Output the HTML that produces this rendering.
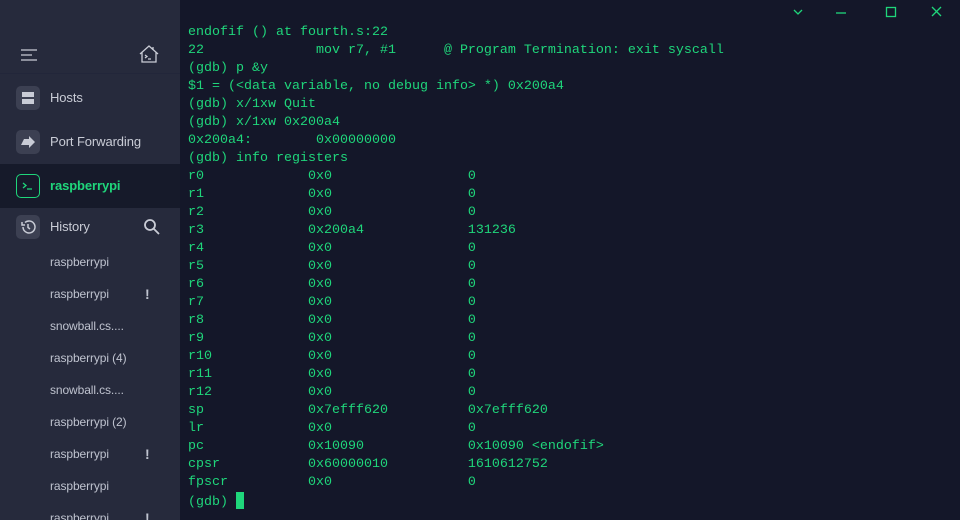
<!DOCTYPE html>
<html><head><style>
*{margin:0;padding:0;box-sizing:border-box}
html,body{width:960px;height:520px;overflow:hidden}
body{background:#141729;position:relative;font-family:"Liberation Sans",sans-serif}
#side{position:absolute;left:0;top:0;width:180px;height:520px;background:#262a3c}
.hdr{position:absolute;left:0;top:0;width:180px;height:74px;border-bottom:1px solid #22263a}
.row{position:absolute;left:0;width:180px;height:44px}
.ic{position:absolute;left:16px;top:10px;width:24px;height:24px;border-radius:5px;background:#3c4052}
.lbl{position:absolute;left:50px;top:14px;font-size:13px;color:#c9ccd6;letter-spacing:-0.1px}
.act{background:#161a2a;top:164px}
.hi{position:absolute;left:50px;font-size:12px;color:#bfc3cf;letter-spacing:-0.1px}
.ex{position:absolute;left:145px;font-size:14px;color:#bfc3cf;font-weight:bold}
#term{position:absolute;left:188px;top:24px;font-family:"Liberation Mono",monospace;font-size:13.33px;line-height:18px;color:#1fd67b;white-space:pre}
.cur{display:inline-block;width:8px;height:17px;background:#1fd67b;vertical-align:-4px}
</style></head><body>
<div id="side">
<div class="hdr">
<svg style="position:absolute;left:20px;top:48px" width="18" height="14"><path d="M1 2H17M1 7H12M1 12H17" stroke="#c9ccd6" stroke-width="1.3"/></svg>
<svg style="position:absolute;left:139px;top:45px" width="20" height="18" fill="none" stroke="#c9ccd6" stroke-width="1.3"><path d="M1 9L10 1L19 9M3 7V17H17V7M6 10L8 11.5L6 13M9 14H12"/><path d="M14 2V5"/></svg>
</div>
<div class="row" style="top:76px"><div class="ic"><svg width="24" height="24"><rect x="6" y="6" width="12" height="5" fill="#c9ccd6"/><rect x="6" y="13" width="12" height="5" fill="#c9ccd6"/></svg></div><div class="lbl">Hosts</div></div>
<div class="row" style="top:120px"><div class="ic"><svg width="24" height="24"><path d="M5 15L8 9H13V6L19 12L13 18V15Z" fill="#c9ccd6"/></svg></div><div class="lbl">Port Forwarding</div></div>
<div class="row act"><div class="ic" style="background:none;border:1px solid #1fd67b;top:10px"><svg width="22" height="22" fill="none" stroke="#1fd67b" stroke-width="1.3"><path d="M6 8L9 10.5L6 13M10 14H15"/></svg></div><div class="lbl" style="color:#1fd67b;font-weight:bold">raspberrypi</div></div>
<div class="row" style="top:205px"><div class="ic"><svg width="24" height="24" fill="none" stroke="#c9ccd6" stroke-width="1.5"><path d="M7 12A6 6 0 1 0 9 7.5M6 7V10H9M12 9V12.5L14 14"/></svg></div><div class="lbl">History</div>
<svg style="position:absolute;left:143px;top:13px" width="18" height="18" fill="none" stroke="#c9ccd6" stroke-width="1.8"><circle cx="7" cy="7" r="5"/><path d="M11 11L16 16"/></svg></div>
<div class="hi" style="top:255px">raspberrypi</div>
<div class="hi" style="top:287px">raspberrypi</div><div class="ex" style="top:286px">!</div>
<div class="hi" style="top:319px">snowball.cs....</div>
<div class="hi" style="top:351px">raspberrypi (4)</div>
<div class="hi" style="top:383px">snowball.cs....</div>
<div class="hi" style="top:415px">raspberrypi (2)</div>
<div class="hi" style="top:447px">raspberrypi</div><div class="ex" style="top:446px">!</div>
<div class="hi" style="top:479px">raspberrypi</div>
<div class="hi" style="top:511px">raspberrypi</div><div class="ex" style="top:510px">!</div>
</div>
<svg style="position:absolute;left:792px;top:6px" width="150" height="14" fill="none" stroke="#1fd67b" stroke-width="1.3"><path d="M2 4L6 8L10 4"/><path d="M44 7H54"/><rect x="94.5" y="1.5" width="9" height="9"/><path d="M140 1L149 10M149 1L140 10"/></svg>
<div id="term">endofif () at fourth.s:22
22              mov r7, #1      @ Program Termination: exit syscall
(gdb) p &amp;y
$1 = (&lt;data variable, no debug info&gt; *) 0x200a4
(gdb) x/1xw Quit
(gdb) x/1xw 0x200a4
0x200a4:        0x00000000
(gdb) info registers
r0             0x0                 0
r1             0x0                 0
r2             0x0                 0
r3             0x200a4             131236
r4             0x0                 0
r5             0x0                 0
r6             0x0                 0
r7             0x0                 0
r8             0x0                 0
r9             0x0                 0
r10            0x0                 0
r11            0x0                 0
r12            0x0                 0
sp             0x7efff620          0x7efff620
lr             0x0                 0
pc             0x10090             0x10090 &lt;endofif&gt;
cpsr           0x60000010          1610612752
fpscr          0x0                 0
(gdb) <span class="cur"></span></div>
</body></html>
